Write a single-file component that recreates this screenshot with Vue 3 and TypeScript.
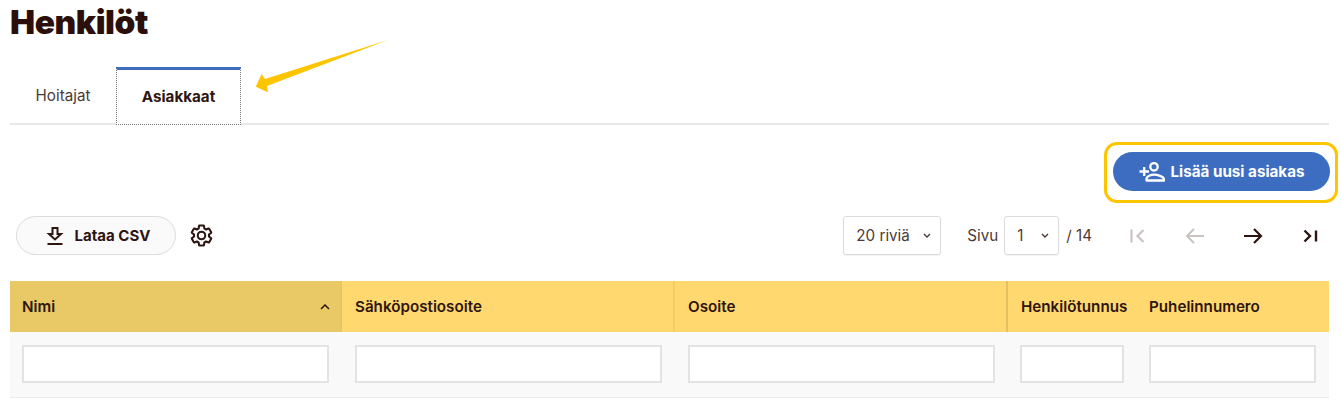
<script setup lang="ts">
const columns = [
  { key: 'name', label: 'Nimi', sorted: true },
  { key: 'email', label: 'Sähköpostiosoite', sorted: false },
  { key: 'address', label: 'Osoite', sorted: false },
  { key: 'ssn', label: 'Henkilötunnus', sorted: false },
  { key: 'phone', label: 'Puhelinnumero', sorted: false },
];
</script>

<template>
  <main class="page">
    <h1 class="title">Henkilöt</h1>

    <nav class="tabs">
      <a class="tab">Hoitajat</a>
      <a class="tab active">Asiakkaat</a>
    </nav>

    <div class="actions">
      <button class="add-btn">
        <svg width="26" height="22" viewBox="0 0 26 22" fill="none" stroke="#fff" stroke-width="2.300" stroke-linecap="butt">
          <path d="M0.500 10.500h9.500M5.200 6v9" />
          <circle cx="15" cy="5.800" r="3.700" />
          <path d="M7.500 19.500v-1.300c0-3 4.700-4.500 7.500-4.500s10 1.500 10 4.500v1.300z" stroke-linejoin="round" />
        </svg>
        Lisää uusi asiakas
      </button>
    </div>

    <div class="toolbar">
      <button class="csv-btn">
        <svg width="18" height="20" viewBox="0 0 18 20" fill="none" stroke="#2e1510" stroke-width="2">
          <path d="M6.500 2h5v6h3.500L9 13.500 3 8h3.500z" stroke-linejoin="miter" />
          <path d="M1.500 18h15" />
        </svg>
        Lataa CSV
      </button>
      <svg class="gear" width="25" height="25" viewBox="0 0 24 24" fill="none" stroke="#2e1510" stroke-width="2" stroke-linejoin="round">
        <path d="M19.140 12.940c.04-.3.06-.61.06-.94 0-.32-.02-.64-.07-.94l2.030-1.580c.18-.14.23-.41.12-.61l-1.920-3.320c-.12-.22-.37-.29-.59-.22l-2.390.96c-.5-.38-1.030-.7-1.620-.94l-.36-2.540c-.04-.24-.24-.41-.48-.41h-3.840c-.24 0-.43.17-.47.41l-.36 2.540c-.59.24-1.130.57-1.620.94l-2.390-.96c-.22-.08-.47 0-.59.22L2.740 8.870c-.12.21-.08.47.12.61l2.030 1.580c-.05.3-.09.63-.09.94s.02.64.07.94l-2.030 1.580c-.18.14-.23.41-.12.61l1.920 3.320c.12.22.37.29.59.22l2.390-.96c.5.38 1.030.7 1.620.94l.36 2.540c.05.24.24.41.48.41h3.840c.24 0 .44-.17.47-.41l.36-2.540c.59-.24 1.130-.56 1.620-.94l2.390.96c.22.08.47 0 .59-.22l1.920-3.320c.12-.22.07-.47-.12-.61l-2.010-1.580zM12 15.600c-1.980 0-3.600-1.620-3.600-3.600s1.620-3.600 3.600-3.600 3.600 1.620 3.600 3.600-1.620 3.600-3.600 3.600z" />
      </svg>

      <div class="spacer"></div>

      <div class="select rows">
        <span>20 riviä</span>
        <svg width="8" height="5" viewBox="0 0 8 5" fill="none" stroke="#4a3a36" stroke-width="1.400"><path d="M1 1l3 3 3-3" /></svg>
      </div>
      <span class="label sivu">Sivu</span>
      <div class="select page-select">
        <span>1</span>
        <svg width="8" height="5" viewBox="0 0 8 5" fill="none" stroke="#4a3a36" stroke-width="1.400"><path d="M1 1l3 3 3-3" /></svg>
      </div>
      <span class="label total">/ 14</span>

      <div class="pager">
        <svg width="20" height="20" viewBox="0 0 20 20" fill="none" stroke="#c9c3c1" stroke-width="2.200"><path d="M3.500 3.500v13M15.500 4l-6 6 6 6" /></svg>
        <svg width="22" height="20" viewBox="0 0 22 20" fill="none" stroke="#c9c3c1" stroke-width="2"><path d="M20 10H3M10 3l-7 7 7 7" /></svg>
        <svg width="22" height="20" viewBox="0 0 22 20" fill="none" stroke="#2e1510" stroke-width="2.200"><path d="M2 10h17M12 3l7 7-7 7" /></svg>
        <svg width="20" height="20" viewBox="0 0 20 20" fill="none" stroke="#2e1510" stroke-width="2.400"><path d="M16 4.500v11M4.500 4.500l5.500 5.500-5.500 5.500" /></svg>
      </div>
    </div>

    <div class="table">
      <div
        v-for="col in columns"
        :key="col.key"
        class="th"
        :class="[col.key, { sorted: col.sorted }]"
      >
        <span>{{ col.label }}</span>
        <svg v-if="col.sorted" width="10" height="6" viewBox="0 0 10 6" fill="none" stroke="#2e1510" stroke-width="1.500"><path d="M1 5l4-4 4 4" /></svg>
      </div>
      <div v-for="col in columns" :key="col.key + '-filter'" class="td" :class="col.key">
        <input class="filter" type="text" />
      </div>
    </div>

    <!-- annotations drawn on top of the screenshot -->
    <div class="highlight"></div>
    <svg class="arrow" width="135" height="56" viewBox="0 0 135 56">
      <path d="M134 2L11 41 7.700 36 1.700 48.700 14 54.300 13 48z" fill="#fdc500" />
    </svg>
  </main>
</template>

<style>
html,
body {
  background: #fff;
}
</style>

<style scoped>
.page {
  position: relative;
  box-sizing: border-box;
  width: 1341px;
  height: 408px;
  padding: 0 12px 0 10px;
  overflow: hidden;
  font-family: Inter, 'Liberation Sans', sans-serif;
  color: #2e1510;
}

.title {
  margin: 0;
  height: 67px;
  font-size: 33.400px;
  line-height: 44px;
  font-weight: 900;
  letter-spacing: -0.4px;
  color: #2c0f0a;
}

.tabs {
  display: flex;
  height: 58px;
  border-bottom: 2px solid #e8e8e8;
  box-sizing: border-box;
}

.tab {
  display: flex;
  align-items: center;
  justify-content: center;
  height: 56px;
  font-size: 15.200px;
  color: #4d3a36;
}

.tab:first-child {
  width: 106px;
}

.tab.active {
  box-sizing: border-box;
  width: 125px;
  height: 58px;
  padding-bottom: 2px;
  font-weight: 700;
  color: #2e1510;
  background: #fff;
  border: 1px dotted #777;
  border-top: 3px solid #3d6dbf;
}

.actions {
  display: flex;
  justify-content: flex-end;
  padding-top: 27px;
  margin-right: -1px;
}

.add-btn {
  display: flex;
  align-items: center;
  justify-content: center;
  gap: 6px;
  width: 217px;
  height: 39px;
  padding: 0;
  border: 0;
  border-radius: 20px;
  background: #3d6dc1;
  color: #fff;
  font: 700 15.200px Inter, 'Liberation Sans', sans-serif;
}

.toolbar {
  display: flex;
  align-items: center;
  height: 39px;
  margin-top: 25px;
  padding-left: 6px;
}

.csv-btn {
  display: flex;
  align-items: center;
  justify-content: center;
  gap: 11px;
  box-sizing: border-box;
  width: 160px;
  height: 39px;
  padding: 0 0 0 4px;
  border: 1px solid #dedbda;
  border-radius: 20px;
  background: #fafafa;
  color: #2e1510;
  font: 700 15px Inter, 'Liberation Sans', sans-serif;
}

.gear {
  margin-left: 13px;
}

.spacer {
  flex: 1;
}

.select {
  display: flex;
  align-items: center;
  justify-content: space-between;
  box-sizing: border-box;
  height: 39px;
  padding: 0 9px 0 12px;
  background: #fff;
  border: 1px solid #dcdcdc;
  border-radius: 3px;
  box-shadow: 0 1px 1px rgba(0, 0, 0, 0.05);
  font-size: 15.200px;
  color: #4d3a36;
}

.rows {
  width: 98px;
}

.page-select {
  width: 55px;
}

.label {
  font-size: 15.200px;
  color: #4d3a36;
}

.sivu {
  margin: 0 6px 0 26px;
}

.total {
  margin-left: 7px;
}

.pager {
  display: flex;
  align-items: center;
  gap: 36px;
  margin-left: 36px;
  margin-right: 9px;
}

.table {
  display: grid;
  grid-template-columns: 332px 333px 333px 129px 192px;
  margin-top: 26px;
  border-bottom: 1px solid #ececec;
}

.th {
  display: flex;
  align-items: center;
  justify-content: space-between;
  box-sizing: border-box;
  height: 51px;
  padding: 0 11px 0 13px;
  background: #ffd970;
  font-size: 15.200px;
  font-weight: 600;
  color: #2e1510;
}

.th.sorted {
  background: #e9c866;
  padding-left: 12px;
}

.th.phone {
  padding-left: 12px;
}

.th.name {
  border-right: 1px solid #e5c262;
}

.th.email {
  border-right: 2px solid #f2cd6a;
}

.th.address {
  border-right: 2px solid #e5c062;
}

.td {
  box-sizing: border-box;
  height: 65px;
  padding: 13px 13px 14px 13px;
  background: #f9f9f9;
}

.td.name,
.td.ssn,
.td.phone {
  padding-left: 12px;
}

.filter {
  display: block;
  box-sizing: border-box;
  width: 100%;
  height: 38px;
  padding: 0 8px;
  border: 2px solid #e3e3e3;
  border-radius: 0;
  background: #fff;
  outline: none;
}

.highlight {
  position: absolute;
  left: 1104px;
  top: 142px;
  width: 234px;
  height: 61px;
  box-sizing: border-box;
  border: 3px solid #fdc500;
  border-radius: 13px;
}

.arrow {
  position: absolute;
  left: 254px;
  top: 38px;
}
</style>
